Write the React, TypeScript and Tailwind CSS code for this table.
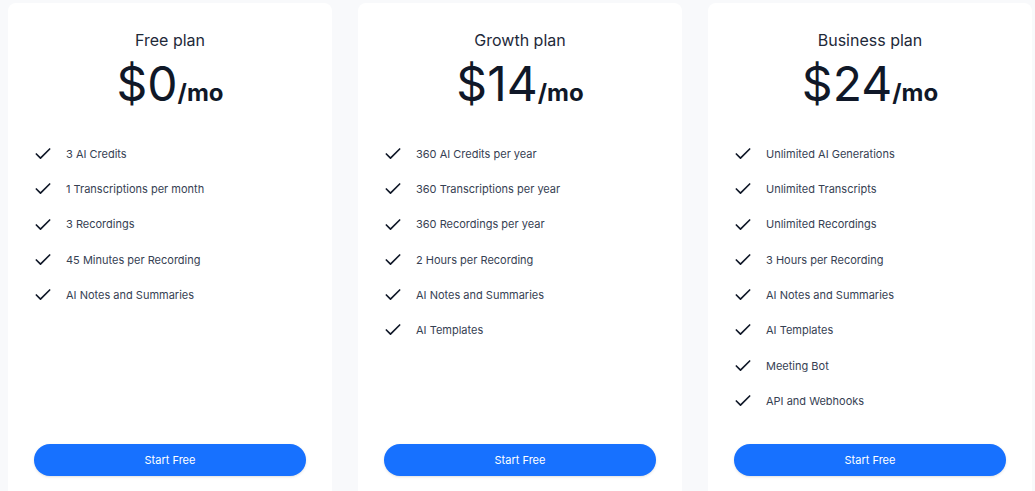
import { Check } from "lucide-react";

interface Plan {
  name: string;
  price: string;
  features: string[];
}

const plans: Plan[] = [
  {
    name: "Free plan",
    price: "$0",
    features: [
      "3 AI Credits",
      "1 Transcriptions per month",
      "3 Recordings",
      "45 Minutes per Recording",
      "AI Notes and Summaries",
    ],
  },
  {
    name: "Growth plan",
    price: "$14",
    features: [
      "360 AI Credits per year",
      "360 Transcriptions per year",
      "360 Recordings per year",
      "2 Hours per Recording",
      "AI Notes and Summaries",
      "AI Templates",
    ],
  },
  {
    name: "Business plan",
    price: "$24",
    features: [
      "Unlimited AI Generations",
      "Unlimited Transcripts",
      "Unlimited Recordings",
      "3 Hours per Recording",
      "AI Notes and Summaries",
      "AI Templates",
      "Meeting Bot",
      "API and Webhooks",
    ],
  },
];

function PlanCard({ plan }: { plan: Plan }) {
  return (
    <div className="w-[324px] h-[499px] shrink-0 bg-white rounded-lg flex flex-col pt-[25px] pb-[26px]">
      {/* Header */}
      <h2 className="text-center text-base leading-6 text-gray-800">{plan.name}</h2>
      <div className="mt-2 flex items-baseline justify-center text-gray-900 leading-none">
        <span className="text-5xl font-normal leading-none">{plan.price}</span>
        <span className="text-2xl font-bold leading-none">/mo</span>
      </div>

      {/* Features */}
      <ul className="mt-9 px-[25px] flex flex-col gap-[15.3px]">
        {plan.features.map((f) => (
          <li key={f} className="h-5 flex items-center gap-[13px]">
            <Check className="w-5 h-5 text-gray-900 shrink-0" strokeWidth={2} />
            <span className="text-[11px] text-gray-700">{f}</span>
          </li>
        ))}
      </ul>

      {/* Button */}
      <div className="mt-auto px-[26px]">
        <button className="w-full h-8 rounded-full bg-[#1771ff] text-white text-[11px] shadow-sm">
          Start Free
        </button>
      </div>
    </div>
  );
}

export default function App() {
  return (
    <div
      className="min-h-screen bg-[#f8f9fb] pl-2 pt-[3px] flex gap-[26px] overflow-hidden"
      style={{ fontFamily: "Inter, 'Noto Sans', sans-serif" }}
    >
      {plans.map((p) => (
        <PlanCard key={p.name} plan={p} />
      ))}
    </div>
  );
}
